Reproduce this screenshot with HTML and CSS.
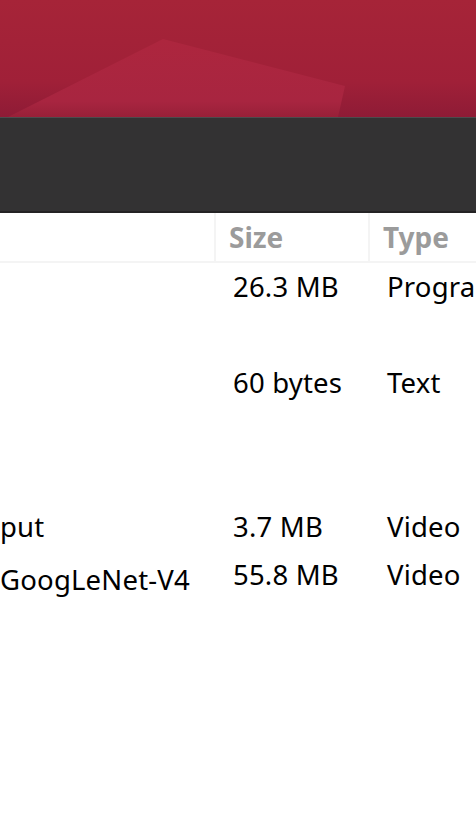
FILE: index.html
```html
<!DOCTYPE html>
<html>
<head>
<meta charset="utf-8">
<link rel="stylesheet" href="styles.css">
</head>
<body>
<div class="wallpaper">
  <svg class="wall-art" width="476" height="117" viewBox="0 0 476 117" preserveAspectRatio="none">
    <defs>
      <linearGradient id="bg" x1="0" y1="0" x2="0" y2="1">
        <stop offset="0" stop-color="#a62438"/>
        <stop offset="0.7" stop-color="#a02038"/>
        <stop offset="1" stop-color="#8e1b36"/>
      </linearGradient>
      <linearGradient id="poly" x1="0" y1="0" x2="0" y2="1">
        <stop offset="0" stop-color="#ad263e"/>
        <stop offset="0.8" stop-color="#a82540"/>
        <stop offset="1" stop-color="#982038"/>
      </linearGradient>
    </defs>
    <rect width="476" height="117" fill="url(#bg)"/>
    <polygon points="8,117 163,39 345,86 338,117" fill="url(#poly)"/>
  </svg>
</div>
<div class="toolbar"></div>
<div class="list">
  <div class="row header">
    <div class="cell name"></div>
    <div class="cell size hcell">Size</div>
    <div class="cell type hcell">Type</div>
  </div>
  <div class="row r2">
    <div class="cell name"></div>
    <div class="cell size">26.3 MB</div>
    <div class="cell type">Progra</div>
  </div>
  <div class="row r3">
    <div class="cell name"></div>
    <div class="cell size">60 bytes</div>
    <div class="cell type">Text</div>
  </div>
  <div class="row r1">
    <div class="cell name">put</div>
    <div class="cell size">3.7 MB</div>
    <div class="cell type">Video</div>
  </div>
  <div class="row r1">
    <div class="cell name low">GoogLeNet-V4</div>
    <div class="cell size">55.8 MB</div>
    <div class="cell type">Video</div>
  </div>
</div>
</body>
</html>
```
FILE: styles.css
```css
html, body {
  margin: 0;
  padding: 0;
  background: #ffffff;
  overflow: hidden;
}
body {
  width: 476px;
  height: 839px;
  font-family: "Noto Sans", "DejaVu Sans", sans-serif;
  color: #000;
}
.wallpaper {
  height: 117px;
  overflow: hidden;
}
.wall-art {
  display: block;
}
.toolbar {
  height: 93px;
  background: #333233;
  border-top: 1px solid #4d4b4d;
  border-bottom: 2px solid #242324;
}
.list {
  display: flex;
  flex-direction: column;
}
.row {
  display: grid;
  grid-template-columns: 214px 154px 1fr;
  align-items: start;
  font-size: 27.5px;
  letter-spacing: 0.2px;
  line-height: 48px;
  white-space: nowrap;
  overflow: hidden;
}
.header {
  height: 48px;
  border-bottom: 2px solid #f4f4f4;
}
.header .cell {
  height: 48px;
}
.hcell {
  border-left: 2px solid #f4f4f4;
  font-weight: bold;
  color: #9b9b9b;
  font-size: 28px;
  letter-spacing: 0;
  line-height: 48px;
}
.r1 { height: 48px; }
.r2 { height: 96px; }
.r3 { height: 144px; }
.name {
  padding-left: 0;
}
.name.low {
  padding-top: 5px;
}
.size, .type {
  padding-left: 19px;
}
.header .size, .header .type {
  padding-left: 13px;
}
```
